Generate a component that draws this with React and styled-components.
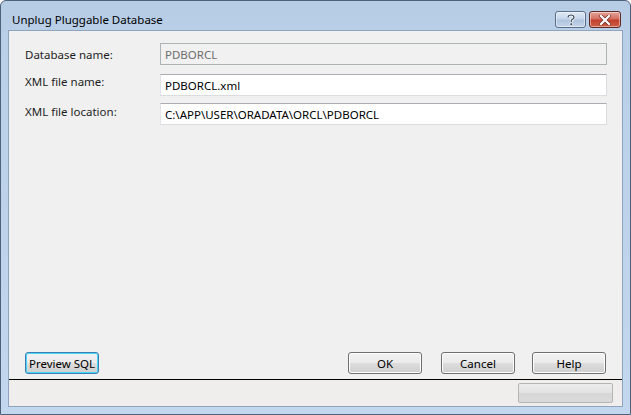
import React from 'react';
import styled, { createGlobalStyle } from 'styled-components';

const GlobalStyle = createGlobalStyle`
  html, body {
    margin: 0;
    padding: 0;
    background: #ffffff;
  }
  body {
    font-family: "Noto Sans", "Open Sans", sans-serif;
    font-size: 11px;
    color: #000;
  }
`;

const Window = styled.div`
  width: 631px;
  height: 415px;
  box-sizing: border-box;
  display: flex;
  flex-direction: column;
  border: 1px solid #4d6178;
  border-radius: 6px 6px 0 0;
  background: linear-gradient(180deg, #b6cbe4 0%, #b9cfe8 8%, #c3d7ee 100%);
  overflow: hidden;
`;

const TitleBar = styled.div`
  height: 29px;
  box-sizing: border-box;
  display: flex;
  align-items: flex-start;
  padding: 9px 9px 0 11px;
`;

const Title = styled.div`
  flex: 1;
  font-size: 11.5px;
  color: #000;
  padding-top: 2px;
`;

const CaptionButton = styled.div`
  width: ${(p) => p.$w}px;
  height: 15px;
  display: flex;
  align-items: center;
  justify-content: center;
  border: 1px solid ${(p) => (p.$close ? '#5c2b28' : '#5a6e87')};
  border-radius: 3px;
  background: ${(p) =>
    p.$close
      ? 'linear-gradient(180deg, #e3a59a 0%, #d46f60 45%, #c2402d 55%, #cf5e45 100%)'
      : 'linear-gradient(180deg, #dfe9f5 0%, #c6d6ea 45%, #afc4de 55%, #c3d5ea 100%)'};
  box-shadow: inset 0 0 0 1px rgba(255, 255, 255, 0.45);
  margin-left: ${(p) => p.$gap || 0}px;
  margin-top: 1px;
`;

const Client = styled.div`
  flex: 1;
  margin: 0 7px 7px 7px;
  display: flex;
  flex-direction: column;
  background: #f0f0f0;
  border: 1px solid #8ea4bf;
`;

const Form = styled.div`
  display: flex;
  flex-direction: column;
  padding: 12px 15px 0 16px;
  flex: 1;
`;

const Row = styled.div`
  display: flex;
  align-items: flex-start;
  margin-bottom: ${(p) => p.$mb}px;
`;

const Label = styled.div`
  width: 135px;
  margin-top: ${(p) => p.$dy}px;
  font-size: 11.5px;
  color: #1e1e1e;
`;

const Field = styled.div`
  flex: 1;
  height: 22px;
  box-sizing: border-box;
  border: 1px solid ${(p) => (p.$disabled ? '#adb2b5' : '#dadce0')};
  border-top-color: ${(p) => (p.$disabled ? '#adb2b5' : '#abadb3')};
  border-left-color: ${(p) => (p.$disabled ? '#adb2b5' : '#e2e3ea')};
  background: ${(p) => (p.$disabled ? '#f1f1f1' : '#ffffff')};
  background-image: ${(p) =>
    p.$disabled ? 'radial-gradient(circle, #e2e2e2 0.6px, transparent 0.7px)' : 'none'};
  background-size: 2px 2px;
  color: ${(p) => (p.$disabled ? '#6d6d6d' : '#000')};
  padding: 0 0 0 4px;
  display: flex;
  align-items: center;
  font-size: 11.5px;
`;

const Spacer = styled.div`
  flex: 1;
`;

const ButtonBar = styled.div`
  display: flex;
  align-items: center;
  padding: 0 16px 5px 16px;
`;

const Button = styled.div`
  width: 74px;
  height: 22px;
  box-sizing: border-box;
  display: flex;
  align-items: center;
  justify-content: center;
  border: 1px solid ${(p) => (p.$default ? '#3c7fb1' : '#707070')};
  border-radius: 3px;
  background: linear-gradient(180deg, #f2f2f2 0%, #ebebeb 48%, #dddddd 52%, #cfcfcf 100%);
  box-shadow: ${(p) =>
    p.$default ? 'inset 0 0 0 1px #48d5f8' : 'inset 0 0 0 1px #fcfcfc'};
  margin-left: ${(p) => p.$ml || 0}px;
  font-size: 11.5px;
  color: #000;
`;

const StatusBar = styled.div`
  height: 26px;
  border-top: 1px solid #000;
  background: #f0eded;
  display: flex;
  justify-content: flex-end;
  align-items: center;
  padding-right: 9px;
`;

const Grip = styled.div`
  width: 95px;
  height: 20px;
  box-sizing: border-box;
  border: 1px solid #b5b5b5;
  border-radius: 2px;
  background: linear-gradient(180deg, #ececec 0%, #e2e2e2 50%, #d6d6d6 51%, #dadada 100%);
`;

const HelpGlyph = () => (
  <svg width="10" height="12" viewBox="0 0 10 12">
    <path
      d="M2 3.5 C2 1.5 3.5 1 5 1 C6.8 1 8 2 8 3.5 C8 5 6 5.3 5.2 6.5 L5.2 8"
      fill="none"
      stroke="#fff"
      strokeWidth="2.6"
    />
    <path
      d="M2 3.5 C2 1.5 3.5 1 5 1 C6.8 1 8 2 8 3.5 C8 5 6 5.3 5.2 6.5 L5.2 8"
      fill="none"
      stroke="#3b4a5c"
      strokeWidth="1.2"
    />
    <rect x="4" y="9" width="2.4" height="2.4" fill="#3b4a5c" stroke="#fff" strokeWidth="0.6" />
  </svg>
);

const CloseGlyph = () => (
  <svg width="12" height="10" viewBox="0 0 12 10">
    <path d="M2 1 L10 9 M10 1 L2 9" stroke="#6b2a22" strokeWidth="3.6" strokeLinecap="square" />
    <path d="M2 1 L10 9 M10 1 L2 9" stroke="#ffffff" strokeWidth="2.2" strokeLinecap="square" />
  </svg>
);

const fields = [
  { label: 'Database name:', value: 'PDBORCL', disabled: true, mb: 9, dy: 4 },
  { label: 'XML file name:', value: 'PDBORCL.xml', mb: 7, dy: 0 },
  { label: 'XML file location:', value: 'C:\\APP\\USER\\ORADATA\\ORCL\\PDBORCL', mb: 0, dy: 1 },
];

const App = () => {
  return (
    <>
      <GlobalStyle />
      <Window>
        <TitleBar>
          <Title>Unplug Pluggable Database</Title>
          <CaptionButton $w={29}>
            <HelpGlyph />
          </CaptionButton>
          <CaptionButton $w={30} $close $gap={3}>
            <CloseGlyph />
          </CaptionButton>
        </TitleBar>
        <Client>
          <Form>
            {fields.map((f) => (
              <Row key={f.label} $mb={f.mb}>
                <Label $dy={f.dy}>{f.label}</Label>
                <Field $disabled={f.disabled}>{f.value}</Field>
              </Row>
            ))}
            <Spacer />
          </Form>
          <ButtonBar>
            <Button $default>Preview SQL</Button>
            <Spacer />
            <Button>OK</Button>
            <Button $ml={19}>Cancel</Button>
            <Button $ml={17}>Help</Button>
          </ButtonBar>
          <StatusBar>
            <Grip />
          </StatusBar>
        </Client>
      </Window>
    </>
  );
};

export default App;
